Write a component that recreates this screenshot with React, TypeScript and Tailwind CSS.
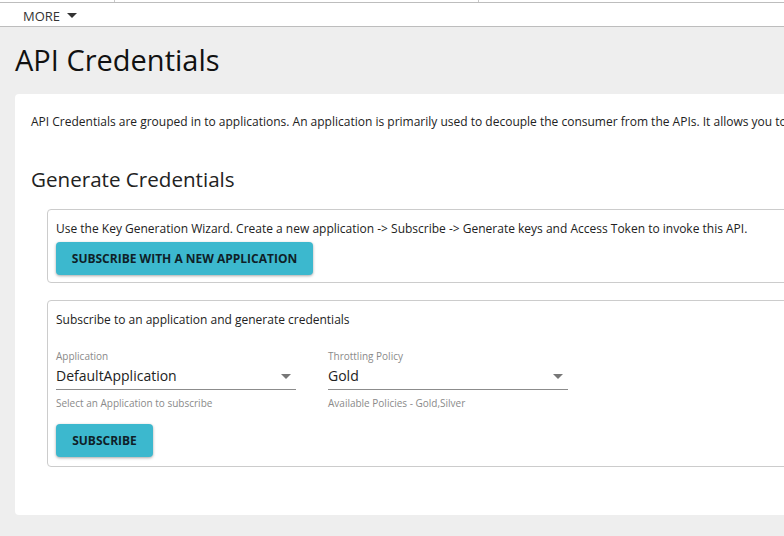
import React from "react";

function Caret({ className }: { className?: string }) {
  return (
    <svg width="10" height="5" viewBox="0 0 10 5" className={className}>
      <path d="M0 0 L10 0 L5 5 Z" fill="currentColor" />
    </svg>
  );
}

function Select({ label, value, helper }: { label: string; value: string; helper: string }) {
  return (
    <div className="w-[240px] flex flex-col">
      <div className="text-[10px] leading-[14px] text-[#8a8a8a]">{label}</div>
      <div className="flex items-start justify-between h-[24px] border-b border-[#8c8c8c] mt-[3px]">
        <span className="text-[14px] leading-[20px] text-[#222]">{value}</span>
        <Caret className="text-[#777] mr-[5px] mt-[8px]" />
      </div>
      <div className="text-[10px] leading-[14px] text-[#8a8a8a] mt-[6px]">{helper}</div>
    </div>
  );
}

export default function App() {
  return (
    <div className="w-[784px] h-[536px] overflow-hidden bg-[#eeeeee] text-[#222]" style={{ fontFamily: '"Open Sans", sans-serif' }}>
      <div className="w-[1200px]">
        <div className="h-[2px] bg-white flex">
          <div className="w-[115px] border-r border-[#c8c8c8]" />
          <div className="w-[364px] border-r border-[#c8c8c8]" />
        </div>
        <div className="h-[1px] bg-[#bdbdbd]" />
        <div className="h-[23px] bg-white flex items-center pl-[23px] pt-[2px] gap-[7px]">
          <span className="text-[13px] leading-[18px] text-[#333]">MORE</span>
          <Caret className="text-[#333]" />
        </div>
        <div className="h-[1px] bg-[#bdbdbd]" />
        <div className="pt-[13px] pl-[15px]">
          <h1 className="text-[29px] leading-[40px] font-normal text-[#111]">API Credentials</h1>
          <div className="mt-[14px] bg-white rounded-[4px] h-[421px] pt-[19px] pl-[16px]">
            <p className="text-[12px] leading-[18px] whitespace-nowrap text-[#222]">
              API Credentials are grouped in to applications. An application is primarily used to decouple the consumer from the APIs. It allows you to generate and use a single key for multiple APIs and subscribe multiple times to a single API with different SLA levels.
            </p>
            <h2 className="mt-[33px] text-[20.6px] leading-[30px] font-normal text-[#222]">Generate Credentials</h2>
            <div className="ml-[16px] mt-[15px] border border-[#cccccc] rounded-[4px] pt-[10px] pb-[7px] pl-[8px]">
              <p className="text-[12px] leading-[18px] whitespace-nowrap">
                Use the Key Generation Wizard. Create a new application -&gt; Subscribe -&gt; Generate keys and Access Token to invoke this API.
              </p>
              <button className="mt-[4px] h-[33px] w-[257px] rounded-[4px] bg-[#3cb8ce] text-[12px] font-bold text-[#0f1f28] uppercase shadow-[0_1px_3px_rgba(0,0,0,0.35)]">
                Subscribe with a new application
              </button>
            </div>
            <div className="ml-[16px] mt-[17px] border border-[#cccccc] rounded-[4px] h-[167px] pt-[10px] pl-[8px]">
              <p className="text-[12px] leading-[18px] whitespace-nowrap">Subscribe to an application and generate credentials</p>
              <div className="mt-[20px] flex gap-[32px]">
                <Select label="Application" value="DefaultApplication" helper="Select an Application to subscribe" />
                <Select label="Throttling Policy" value="Gold" helper="Available Policies - Gold,Silver" />
              </div>
              <button className="mt-[14px] h-[33px] w-[97px] rounded-[4px] bg-[#3cb8ce] text-[12px] font-bold text-[#0f1f28] uppercase shadow-[0_1px_3px_rgba(0,0,0,0.35)]">
                Subscribe
              </button>
            </div>
          </div>
        </div>
      </div>
    </div>
  );
}
